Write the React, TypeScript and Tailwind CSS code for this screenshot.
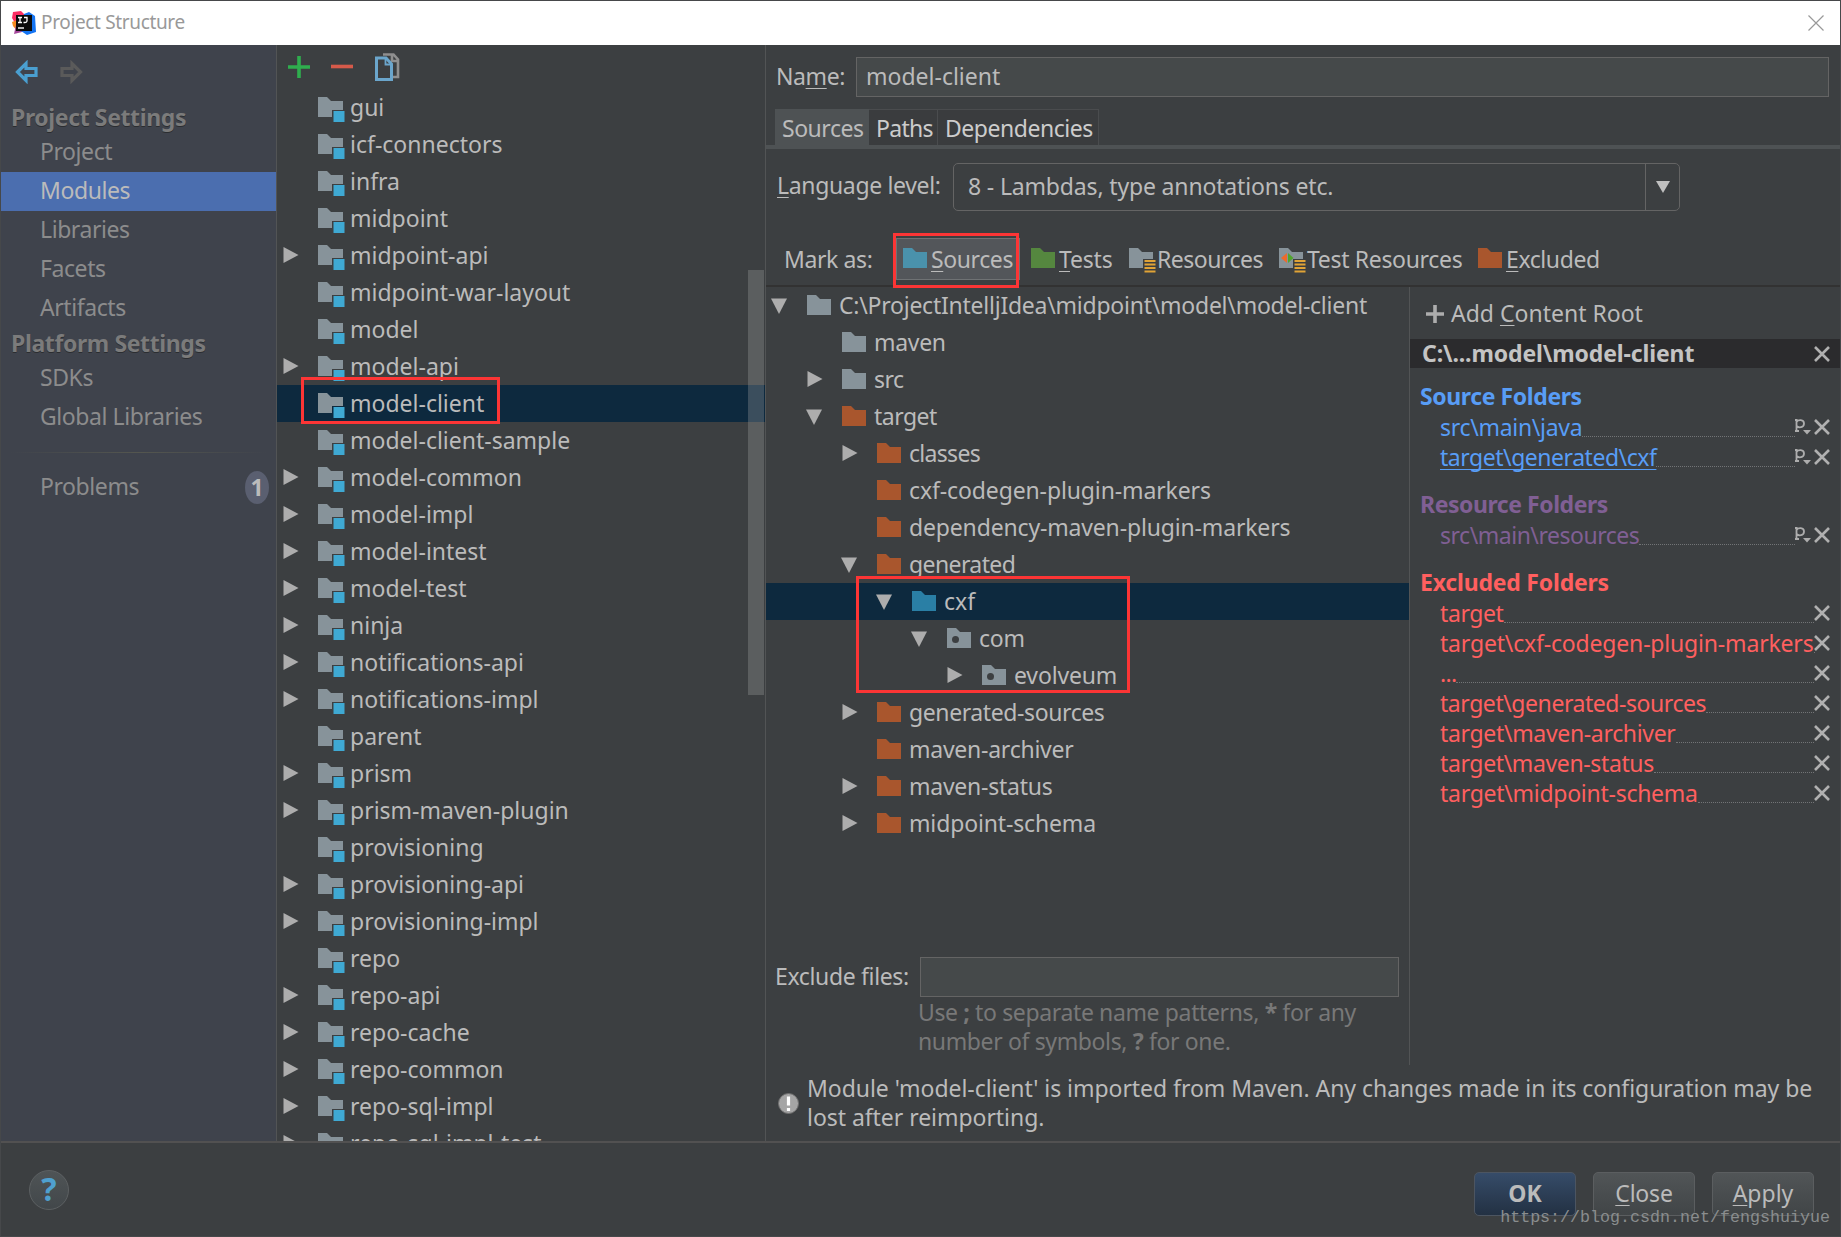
import type { ReactNode } from 'react'

const modules = [
  { name: 'gui' },
  { name: 'icf-connectors' },
  { name: 'infra' },
  { name: 'midpoint' },
  { name: 'midpoint-api', arrow: true },
  { name: 'midpoint-war-layout' },
  { name: 'model' },
  { name: 'model-api', arrow: true },
  { name: 'model-client', selected: true },
  { name: 'model-client-sample' },
  { name: 'model-common', arrow: true },
  { name: 'model-impl', arrow: true },
  { name: 'model-intest', arrow: true },
  { name: 'model-test', arrow: true },
  { name: 'ninja', arrow: true },
  { name: 'notifications-api', arrow: true },
  { name: 'notifications-impl', arrow: true },
  { name: 'parent' },
  { name: 'prism', arrow: true },
  { name: 'prism-maven-plugin', arrow: true },
  { name: 'provisioning' },
  { name: 'provisioning-api', arrow: true },
  { name: 'provisioning-impl', arrow: true },
  { name: 'repo' },
  { name: 'repo-api', arrow: true },
  { name: 'repo-cache', arrow: true },
  { name: 'repo-common', arrow: true },
  { name: 'repo-sql-impl', arrow: true },
  { name: 'repo-sql-impl-test', arrow: true },
]

type Node = {
  name: string
  level: number
  state?: 'open' | 'closed'
  color: string
  pkg?: boolean
  selected?: boolean
  tracking?: string
}

const GRAY = '#87939a'
const ORANGE = '#a9562d'

const tree: Node[] = [
  { name: 'C:\\ProjectIntelljIdea\\midpoint\\model\\model-client', level: 0, state: 'open', color: GRAY, tracking: 'tracking-[-0.24px]' },
  { name: 'maven', level: 1, color: GRAY, tracking: 'tracking-[-0.3px]' },
  { name: 'src', level: 1, state: 'closed', color: GRAY, tracking: 'tracking-[-0.5px]' },
  { name: 'target', level: 1, state: 'open', color: ORANGE, tracking: 'tracking-[-0.5px]' },
  { name: 'classes', level: 2, state: 'closed', color: ORANGE, tracking: 'tracking-[-0.7px]' },
  { name: 'cxf-codegen-plugin-markers', level: 2, color: ORANGE, tracking: 'tracking-[-0.12px]' },
  { name: 'dependency-maven-plugin-markers', level: 2, color: ORANGE, tracking: 'tracking-[-0.16px]' },
  { name: 'generated', level: 2, state: 'open', color: ORANGE, tracking: 'tracking-[-0.6px]' },
  { name: 'cxf', level: 3, state: 'open', color: '#2a7fa5', selected: true },
  { name: 'com', level: 4, state: 'open', color: GRAY, pkg: true, tracking: 'tracking-[-0.2px]' },
  { name: 'evolveum', level: 5, state: 'closed', color: GRAY, pkg: true, tracking: 'tracking-[-0.15px]' },
  { name: 'generated-sources', level: 2, state: 'closed', color: ORANGE, tracking: 'tracking-[-0.4px]' },
  { name: 'maven-archiver', level: 2, color: ORANGE, tracking: 'tracking-[-0.25px]' },
  { name: 'maven-status', level: 2, state: 'closed', color: ORANGE, tracking: 'tracking-[-0.25px]' },
  { name: 'midpoint-schema', level: 2, state: 'closed', color: ORANGE, tracking: 'tracking-[-0.15px]' },
]

const indents = ['w-0', 'w-[35px]', 'w-[70px]', 'w-[105px]', 'w-[140px]', 'w-[175px]']

function Folder({ color, pkg }: { color: string; pkg?: boolean }) {
  return (
    <svg width="24" height="20" viewBox="0 0 24 20" className="shrink-0">
      <path d="M0 0H9L13 4H24V20H0Z" fill={color} />
      {pkg && <circle cx="8.5" cy="11.5" r="3.5" fill="#3c3f41" />}
    </svg>
  )
}

function ModuleIcon() {
  return (
    <svg width="27" height="25" viewBox="0 0 27 25" className="shrink-0">
      <path d="M0 0H9L13 4H25V13H14V20H0Z" fill={GRAY} />
      <rect x="15.5" y="14" width="11" height="11" fill="#3fa9d3" />
    </svg>
  )
}

function ResourceIcon({ test }: { test?: boolean }) {
  return (
    <svg width="27" height="26" viewBox="0 0 27 26" className="shrink-0">
      <path d="M0 0H9L13 4H24V11H14V20H0Z" fill={GRAY} />
      {[12, 15.5, 19, 22.5].map((y) => (
        <rect key={y} x="15.5" y={y} width="11" height="2" fill="#e0a336" />
      ))}
      {test && (
        <>
          <path d="M8 5V15L2 10Z" fill="#ee6a2c" />
          <path d="M9 5V15L14.500 10Z" fill="#4fa52b" />
        </>
      )}
    </svg>
  )
}

function Arrow({ open }: { open?: boolean }) {
  return open ? (
    <svg width="16" height="16" viewBox="0 0 16 16" className="shrink-0">
      <path d="M0 0.500H16L8 16Z" fill="#adadad" />
    </svg>
  ) : (
    <svg width="16" height="16" viewBox="0 0 16 16" className="shrink-0">
      <path d="M0.500 0L15.500 8L0.500 16Z" fill="#adadad" />
    </svg>
  )
}

function Cross() {
  return (
    <svg width="16" height="16" viewBox="0 0 16 16" className="shrink-0">
      <path d="M1 1L15 15M15 1L1 15" stroke="#b0b0b0" strokeWidth="2.600" />
    </svg>
  )
}

function PrefixIcon() {
  return (
    <svg width="16" height="16" viewBox="0 0 16 16" className="mr-[3px] shrink-0">
      <path d="M0 1H2.500M1.500 0.500V12M0 12H4M1.500 3C3 0.500 9 0 9 4.500C9 9 3.500 9 1.500 7" fill="none" stroke="#adadad" strokeWidth="1.800" />
      <path d="M8 11H16L12 15.500Z" fill="#adadad" />
    </svg>
  )
}

function U({ children }: { children: ReactNode }) {
  return <span className="underline decoration-1 underline-offset-[3px]">{children}</span>
}

type FolderRowProps = { path: string; color: string; tracking?: string; prefix?: boolean; link?: boolean }

function FolderRow({ path, color, tracking = '', prefix, link }: FolderRowProps) {
  return (
    <div className="flex h-[30px] pl-[30px] pr-[10px]">
      <span className={`${color} ${tracking} ${link ? 'underline decoration-1 underline-offset-[3px] [text-decoration-skip-ink:none]' : ''} leading-[31px] whitespace-pre`}>
        {path}
      </span>
      <div className="mb-[5px] flex-1 border-b border-dotted border-[#727476]" />
      <div className="flex pt-[7px]">
        {prefix && <PrefixIcon />}
        <Cross />
      </div>
    </div>
  )
}

function TitleBar() {
  return (
    <div className="flex h-11 shrink-0 items-center bg-white pl-[11px] pr-[16px]">
      <svg width="24" height="24" viewBox="0 0 24 24" className="-mt-px">
        <path d="M1 1L9 0L13 4L7 13L3 12L0 7Z" fill="#fb2d63" />
        <path d="M0 11L5 9L5 20L1 15Z" fill="#f58a1f" />
        <path d="M2 23L4 14L14 20Z" fill="#a3469a" />
        <path d="M12 3L17 1L23 5L24 21L15 24L9 20Z" fill="#1474f2" />
        <rect x="4" y="4" width="16" height="16" fill="#0b0b0b" />
        <path d="M6 6.500H10M8 6.500V11.500M6 11.500H10M12 6.500H15V10Q15 11.500 13 11.500H11.500" fill="none" stroke="#fff" strokeWidth="1.300" />
        <path d="M6 17H12" stroke="#fff" strokeWidth="1.400" />
      </svg>
      <span className="-mt-[2px] ml-[5px] flex-1 text-[19px] tracking-[-0.35px] text-[#999]">Project Structure</span>
      <svg width="16" height="16" viewBox="0 0 16 16">
        <path d="M0.500 0.500L15.500 15.500M15.500 0.500L0.500 15.500" stroke="#999" strokeWidth="1.200" />
      </svg>
    </div>
  )
}

function Item({ label, active }: { label: string; active?: boolean }) {
  return (
    <div className={`h-[39px] pl-[39px] leading-[37px] tracking-[-0.42px] ${active ? 'bg-[#4b6eaf] text-[#bbb]' : 'text-[#8c8c8c]'}`}>{label}</div>
  )
}

function Heading({ label }: { label: string }) {
  return <div className="h-[31px] pl-[10px] leading-[31px] font-bold tracking-[-0.38px] text-[#7b7b7b] [text-shadow:0_1px_0_#2b2d30]">{label}</div>
}

function Sidebar() {
  return (
    <div className="w-[275px] shrink-0 bg-[#3f434c]">
      <div className="flex h-[57px] gap-[22px] pl-[14px] pt-[15px]">
        <svg width="23" height="24" viewBox="0 0 23 24">
          <path d="M2.500 12L11 3.500V8.500H21V15.500H11V20.500Z" fill="none" stroke="#4a9fd0" strokeWidth="3.200" />
        </svg>
        <svg width="23" height="24" viewBox="0 0 23 24">
          <path d="M20.500 12L12 3.500V8.500H2V15.500H12V20.500Z" fill="none" stroke="#5a5a5a" strokeWidth="3.200" />
        </svg>
      </div>
      <Heading label="Project Settings" />
      <Item label="Project" />
      <Item label="Modules" active />
      <Item label="Libraries" />
      <Item label="Facets" />
      <Item label="Artifacts" />
      <Heading label="Platform Settings" />
      <Item label="SDKs" />
      <Item label="Global Libraries" />
      <div className="mx-[9px] mt-[15px] mb-[15px] h-px bg-gradient-to-r from-transparent via-[#54564f] to-transparent" />
      <div className="flex items-center justify-between pr-[7px]">
        <Item label="Problems" />
        <span className="h-[33px] w-6 rounded-[50%] bg-[#5a5f70] text-center leading-[32px] font-bold text-[#bbb]">1</span>
      </div>
    </div>
  )
}

function ModuleList() {
  return (
    <div className="relative w-[489px] shrink-0 overflow-hidden border-l border-[#525455]">
      <div className="flex h-11 pl-[11px]">
        <svg width="22" height="22" viewBox="0 0 22 22" className="mt-[11px]">
          <path d="M11 0V22M0 11H22" stroke="#2fae4e" strokeWidth="3.600" />
        </svg>
        <svg width="22" height="22" viewBox="0 0 22 22" className="mt-3 ml-[21px]">
          <path d="M0 9.500H22" stroke="#d65a4a" strokeWidth="3.600" />
        </svg>
        <svg width="25" height="29" viewBox="0 0 25 29" className="mt-2 ml-[22px]">
          <path d="M8 1.500H18.500L23 6.500V24H17M17 1.500V8H23" fill="none" stroke="#8f8f8f" strokeWidth="2.600" />
          <path d="M1.500 5H11L16.500 11V26.500H1.500Z" fill="#3c3f41" stroke="#6ba6cc" strokeWidth="3" />
          <path d="M10.500 5V11.500H16.500" fill="none" stroke="#6ba6cc" strokeWidth="1.800" />
        </svg>
      </div>
      {modules.map((m) => (
        <div key={m.name} className={`flex h-[37px] pl-[6px] leading-[37px] text-[#bbb] ${m.selected ? 'bg-[#0d293e]' : ''}`}>
          <div className="w-[34.5px] shrink-0 pt-[10px]">{m.arrow && <Arrow />}</div>
          <div className="w-[32.5px] shrink-0 pt-2">
            <ModuleIcon />
          </div>
          <span className="whitespace-pre">{m.name}</span>
        </div>
      ))}
      {/* scrollbar thumb */}
      <div className="absolute top-[225px] right-px h-[425px] w-4 bg-[#a6a6a6]/30" />
      <div className="absolute top-[332px] left-6 h-[47px] w-[199px] border-3 border-[#fc3535]" />
    </div>
  )
}

function MarkAs() {
  return (
    <div className="relative flex h-[74px] pt-[27px] pl-[18px] leading-[42px] tracking-[-0.4px] text-[#bbb]">
      <span className="w-[112px]">Mark as:</span>
      <div className="flex h-[42px] w-[124px] border border-[#6f7274] bg-[#53565a] pl-[6px]">
        <span className="mt-[9px] mr-[4px]"><Folder color="#4a92ac" /></span>
        <span className="-mt-px"><U>S</U>ources</span>
      </div>
      <div className="flex w-[109px] pl-[11px]">
        <span className="mt-[10px] mr-[4px]"><Folder color="#55873f" /></span>
        <span className="tracking-[-0.2px]"><U>T</U>ests</span>
      </div>
      <div className="flex w-[150px] whitespace-pre">
        <span className="mt-[10px] mr-px"><ResourceIcon /></span>
        <span className="tracking-[-0.5px]">Resources</span>
      </div>
      <div className="flex w-[199px] whitespace-pre">
        <span className="mt-[10px] mr-px"><ResourceIcon test /></span>
        <span className="tracking-[-0.33px]">Test Resources</span>
      </div>
      <div className="flex">
        <span className="mt-[10px] mr-[4px]"><Folder color={ORANGE} /></span>
        <span><U>E</U>xcluded</span>
      </div>
      <div className="absolute top-[22px] left-[127px] z-10 h-[55px] w-[126px] border-3 border-[#fc3535]" />
    </div>
  )
}

function SourceTree() {
  return (
    <div className="relative flex w-[643px] shrink-0 flex-col">
      <div className="h-[670px]">
        {tree.map((n) => (
          <div key={n.name} className={`flex h-[37px] pl-[5px] leading-[37px] text-[#bbb] ${n.selected ? 'bg-[#0d293e]' : ''}`}>
            <div className={`${indents[n.level]} shrink-0`} />
            <div className={`w-9 shrink-0 ${n.state === 'open' ? 'pt-[11px]' : 'pt-[10px] pl-px'}`}>
              {n.state && <Arrow open={n.state === 'open'} />}
            </div>
            <div className="w-8 shrink-0 pt-2">
              <Folder color={n.color} pkg={n.pkg} />
            </div>
            <span className={`whitespace-pre ${n.tracking ?? ''}`}>{n.name}</span>
          </div>
        ))}
      </div>
      <div className="flex pr-[10px] pl-[9px]">
        <span className="w-[145px] shrink-0 leading-[39px] tracking-[-0.35px] text-[#bbb]">Exclude files:</span>
        <div className="h-10 flex-1 border border-[#646464] bg-[#45494a]" />
      </div>
      <div className="pt-px pl-[152px] leading-[29px] tracking-[-0.37px] whitespace-pre text-[#787878]">
        Use <b>;</b> to separate name patterns, <b>*</b> for any<br />number of symbols, <b>?</b> for one.
      </div>
      <div className="absolute top-[289px] left-[90px] h-[117px] w-[274px] border-3 border-[#fc3535]" />
    </div>
  )
}

function ContentRoots() {
  return (
    <div className="flex-1 border-l border-[#525455]">
      <div className="flex h-[52px] pl-4 leading-[45px] text-[#bbb]">
        <svg width="18" height="18" viewBox="0 0 18 18" className="mt-[18px] mr-[7px]">
          <path d="M9 0V18M0 9H18" stroke="#adadad" strokeWidth="3.600" />
        </svg>
        <span className="pt-1">Add <U>C</U>ontent Root</span>
      </div>
      <div className="flex h-[29px] items-center justify-between bg-[#2b2b2d] pr-[10px] pl-3 font-bold text-[#c4c4c4]">
        <span className="leading-[29px] tracking-[-0.12px]">C:\...model\model-client</span>
        <Cross />
      </div>
      <div className="mt-[13px] h-[31px] pl-[10px] leading-[31px] font-bold tracking-[-0.4px] text-[#589df6]">Source Folders</div>
      <FolderRow path="src\main\java" color="text-[#589df6]" tracking="tracking-[-0.3px]" prefix />
      <FolderRow path="target\generated\cxf" color="text-[#589df6]" tracking="tracking-[-0.47px]" prefix link />
      <div className="mt-[17px] h-[31px] pl-[10px] leading-[31px] font-bold tracking-[-0.45px] text-[#805f94]">Resource Folders</div>
      <FolderRow path="src\main\resources" color="text-[#805f94]" tracking="tracking-[-0.48px]" prefix />
      <div className="mt-[17px] h-[31px] pl-[10px] leading-[31px] font-bold tracking-[-0.2px] text-[#ff5f5f]">Excluded Folders</div>
      <FolderRow path="target" color="text-[#ff5f5f]" tracking="tracking-[-0.4px]" />
      <FolderRow path="target\cxf-codegen-plugin-markers" color="text-[#ff5f5f]" tracking="tracking-[-0.18px]" />
      <FolderRow path="..." color="text-[#ff5f5f]" tracking="tracking-[-0.7px]" />
      <FolderRow path="target\generated-sources" color="text-[#ff5f5f]" tracking="tracking-[-0.44px]" />
      <FolderRow path="target\maven-archiver" color="text-[#ff5f5f]" tracking="tracking-[-0.33px]" />
      <FolderRow path="target\maven-status" color="text-[#ff5f5f]" tracking="tracking-[-0.37px]" />
      <FolderRow path="target\midpoint-schema" color="text-[#ff5f5f]" tracking="tracking-[-0.27px]" />
    </div>
  )
}

function Editor() {
  return (
    <div className="flex min-w-0 flex-1 flex-col border-l border-[#525455] text-[#bbb]">
      <div className="flex pt-3 pr-[11px] pl-[10px]">
        <span className="w-[80px] leading-[38px] tracking-[-0.4px]">Na<U>m</U>e:</span>
        <div className="h-10 flex-1 border border-[#646464] bg-[#45494a] pl-[9px] leading-[37px]">model-client</div>
      </div>
      <div className="mt-3 flex h-9 pl-[9px] leading-[39px] tracking-[-0.47px]">
        <div className="w-[94px] bg-[#4e5254] pl-[7px]">Sources</div>
        <div className="w-[69px] border-t border-r border-[#4a4c4e] bg-[#3a3c3e] pl-[7px] leading-[37px] tracking-[-0.7px] text-[#ccc]">Paths</div>
        <div className="w-[161px] border-t border-r border-[#4a4c4e] bg-[#3a3c3e] pl-[7px] leading-[37px] text-[#ccc]">Dependencies</div>
      </div>
      <div className="h-1 bg-[#4e5254]" />
      <div className="mt-[14px] flex h-12 pl-[11px]">
        <span className="w-[176px] leading-[44px] tracking-[-0.34px]"><U>L</U>anguage level:</span>
        <div className="flex w-[727px] rounded-[5px] border border-[#646464]">
          <span className="flex-1 pl-[14px] leading-[45px] tracking-[-0.16px]">8 - Lambdas, type annotations etc.</span>
          <div className="flex w-[34px] items-center justify-center border-l border-[#646464]">
            <svg width="14" height="12" viewBox="0 0 14 12">
              <path d="M0 0H14L7 12Z" fill="#c0c0c0" />
            </svg>
          </div>
        </div>
      </div>
      <MarkAs />
      <div className="flex h-[780px] border-t-2 border-[#323232]">
        <SourceTree />
        <ContentRoots />
      </div>
      <div className="flex flex-1 items-center pl-[12px]">
        <svg width="21" height="21" viewBox="0 0 21 21" className="mr-2 shrink-0">
          <circle cx="10.500" cy="10.500" r="10" fill="#a5a5a5" stroke="#707070" />
          <path d="M10.500 3.500V12.500M10.500 15V18" stroke="#fff" strokeWidth="3.200" />
        </svg>
        <div className="leading-[29px] tracking-[-0.05px] whitespace-pre">
          Module 'model-client' is imported from Maven. Any changes made in its configuration may be<br />lost after reimporting.
        </div>
      </div>
    </div>
  )
}

function Footer() {
  return (
    <div className="relative flex h-[95px] shrink-0 items-start justify-between border-t-2 border-[#525151] pt-[27px] pr-[26px] pl-7">
      <div className="flex size-10 items-center justify-center rounded-full border border-[#5c6062] bg-gradient-to-b from-[#4f5456] to-[#42474a] pb-0.5 text-[32px] leading-none font-bold text-[#4fa0cf]">
        ?
      </div>
      <div className="mt-0.5 flex gap-[17px] leading-[41px] text-[#bbb]">
        <div className="h-11 w-[102px] rounded-[5px] border border-[#4c5561] bg-gradient-to-b from-[#364c69] to-[#233143] text-center font-bold">OK</div>
        <div className="h-11 w-[102px] rounded-[5px] border border-[#5b5e60] bg-gradient-to-b from-[#515557] to-[#414547] text-center tracking-[-0.2px]"><U>C</U>lose</div>
        <div className="h-11 w-[102px] rounded-[5px] border border-[#5b5e60] bg-gradient-to-b from-[#515557] to-[#414547] text-center"><U>A</U>pply</div>
      </div>
      <div className="absolute right-[10px] bottom-[6px] font-['Liberation_Mono',monospace] text-[16.67px] leading-6 text-[#8a8d8e]">
        https://blog.csdn.net/fengshuiyue
      </div>
    </div>
  )
}

export default function App() {
  return (
    <div className="h-[1237px] w-[1841px] overflow-hidden border border-[#46484a] bg-[#3c3f41] font-['Noto_Sans',sans-serif] text-[23px]">
      <div className="flex h-full flex-col">
        <TitleBar />
        <div className="flex min-h-0 flex-1">
          <Sidebar />
          <ModuleList />
          <Editor />
        </div>
        <Footer />
      </div>
    </div>
  )
}
